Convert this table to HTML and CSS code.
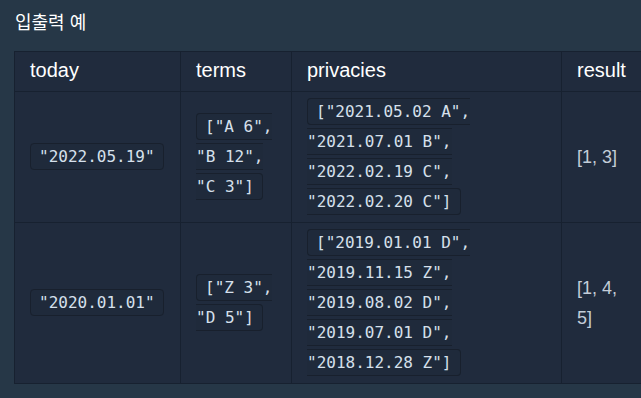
FILE: index.html
```html
<!DOCTYPE html>
<html lang="ko">
<head>
<meta charset="utf-8">
<title>입출력 예</title>
<link rel="stylesheet" href="styles.css">
</head>
<body>
<div class="page">
  <h5 class="title">입출력 예</h5>
  <table class="io">
    <colgroup>
      <col class="c1"><col class="c2"><col class="c3"><col class="c4">
    </colgroup>
    <thead>
      <tr><th>today</th><th>terms</th><th>privacies</th><th>result</th></tr>
    </thead>
    <tbody>
      <tr>
        <td><code>"2022.05.19"</code></td>
        <td><code>["A 6", "B 12", "C 3"]</code></td>
        <td><code>["2021.05.02 A", "2021.07.01 B", "2022.02.19 C", "2022.02.20 C"]</code></td>
        <td>[1, 3]</td>
      </tr>
      <tr>
        <td><code>"2020.01.01"</code></td>
        <td><code>["Z 3", "D 5"]</code></td>
        <td><code>["2019.01.01 D", "2019.11.15 Z", "2019.08.02 D", "2019.07.01 D", "2018.12.28 Z"]</code></td>
        <td>[1, 4, 5]</td>
      </tr>
    </tbody>
  </table>
</div>
</body>
</html>
```
FILE: styles.css
```css
html, body {
  margin: 0;
  padding: 0;
  background: #263747;
}
.page {
  padding: 8px 0 0 14px;
  font-family: "Liberation Sans", Arial, sans-serif;
  color: #ffffff;
}
.title {
  margin: 0 0 16px 1px;
  font-family: "Noto Sans CJK KR", "Liberation Sans", sans-serif;
  font-size: 18px;
  font-weight: normal;
  line-height: 27px;
  color: #ffffff;
}
.io {
  border-collapse: collapse;
  table-layout: fixed;
  width: 627px;
  background: #202b3d;
  border: 1px solid #172130;
}
.c1 { width: 166px; }
.c2 { width: 111px; }
.c3 { width: 270px; }
.c4 { width: 80px; }
.io th {
  border: 1px solid #172130;
  text-align: left;
  font-weight: normal;
  font-size: 20px;
  line-height: 29px;
  padding: 4px 15px 6px;
  color: #ffffff;
}
.io td {
  border: 1px solid #172130;
  font-size: 18px;
  line-height: 30px;
  padding: 5px 15px;
  vertical-align: middle;
  color: #c3cdd8;
}
.io code {
  font-family: "DejaVu Sans Mono", monospace;
  font-size: 16px;
  line-height: 30px;
  vertical-align: top;
  color: #d6e0ec;
  background: #1f2a3b;
  border: 1px solid #18202d;
  border-radius: 4px;
  padding: 3px 8px;
}
```
